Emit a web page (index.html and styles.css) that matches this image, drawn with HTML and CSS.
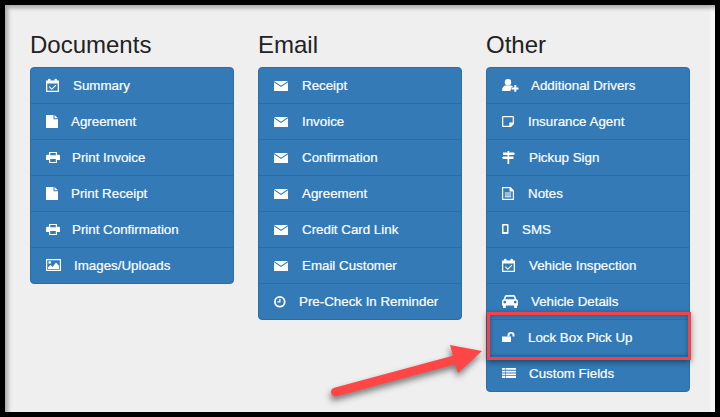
FILE: index.html
```html
<!DOCTYPE html>
<html lang="en">
<head>
<meta charset="utf-8">
<title>Reservation actions</title>
<link rel="stylesheet" href="styles.css">
</head>
<body>
<svg class="defs" aria-hidden="true">
  <symbol id="cal" viewBox="0 0 15 16"><path fill-rule="evenodd" d="M0 3.500h2V3a1 1 0 0 1 2.600 0v.5h3.800V3A1 1 0 0 1 11 3v.5h2V15H0ZM1.300 6.500v7.200h10.400V6.500Z"/><path d="M3.700 9.300 5.800 11.400 9.500 7.700 10.300 8.500 5.800 13 2.900 10.100Z"/></symbol>
  <symbol id="file" viewBox="0 0 13 16"><path d="M0 2h7.500v4.200H12V15H0ZM8.500 2 12 5.300H8.500Z"/></symbol>
  <symbol id="print" viewBox="0 0 14 16"><path fill-rule="evenodd" d="M3 3h8v2.800h1.800A1.200 1.200 0 0 1 14 7v4h-3v3H3v-3H0V7a1.200 1.200 0 0 1 1.200-1.200H3ZM4.200 4.100v2.200h5.600V4.100ZM4.200 10v2.900h5.600V10Z"/></symbol>
  <symbol id="image" viewBox="0 0 16 16"><path fill-rule="evenodd" d="M0 2h15v12H0ZM1.200 3.200v9.600h12.600V3.200Z"/><path d="M2 12v-1.500L4.500 8l2 2 3.500-4.500 3 3.500v3Z"/><circle cx="3.700" cy="5.400" r="1.300"/></symbol>
  <symbol id="mail" viewBox="0 0 16 16"><path d="M0 4h14L7 8.700Z"/><path d="M0 5.200 7 10 14 5.200V14H0Z"/></symbol>
  <symbol id="clock" viewBox="0 0 13 16"><path fill-rule="evenodd" d="M5.800 3a5.800 5.800 0 1 1 0 11.600 5.800 5.800 0 0 1 0-11.600ZM5.800 4.800a4 4 0 1 0 0 8 4 4 0 0 0 0-8Z"/><path d="M5.300 5.800h1.200v3.600H3.400V8.300h1.900Z"/></symbol>
  <symbol id="useradd" viewBox="0 0 17 16"><circle cx="6" cy="5.200" r="3.200"/><path d="M0 14C0 10.500 1.800 8.600 3.500 8.600h5c1 0 2 .6 2.500 1.400H9.500v2.500H8.500V14Z"/><path d="M12.300 8h2v2.500H16.500v1.900h-2.200V14.700h-2v-2.300H10v-1.900h2.300Z"/></symbol>
  <symbol id="note" viewBox="0 0 14 16"><path fill-rule="evenodd" d="M1 3h10a1 1 0 0 1 1 1v7l-3 3H1a1 1 0 0 1-1-1V4a1 1 0 0 1 1-1ZM1.300 4.300v8.400h6V9.500h3.400V4.300Z"/></symbol>
  <symbol id="sign" viewBox="0 0 15 16"><path d="M5.500 2h1.700v1.500h4.600L13 4.800 11.800 6H7.200v1.500h4.300v2.500H7.200V15H5.500v-5H1.200L0 8.800 1.200 7.500h4.300V6H1V3.500h4.500Z"/></symbol>
  <symbol id="notes" viewBox="0 0 14 16"><path fill-rule="evenodd" d="M0 2h8.500L12 5.500V15H0ZM1.200 3.200v10.600h9.600V6.500H7.500V3.200Z"/><path d="M2.800 7.500h6.400v1H2.800ZM2.800 9.400h6.400v1H2.800ZM2.800 11.300h6.400v1H2.800Z"/></symbol>
  <symbol id="phone" viewBox="0 0 8 16"><path fill-rule="evenodd" d="M1 3h4.500a1 1 0 0 1 1 1v8a1 1 0 0 1-1 1H1a1 1 0 0 1-1-1V4a1 1 0 0 1 1-1ZM1.500 4.500v6.500h3.500V4.500Z"/></symbol>
  <symbol id="car" viewBox="0 0 17 16"><path fill-rule="evenodd" d="M4.500 2h7a2 2 0 0 1 1.800 1.200L14.300 6.200C15.400 6.500 16 7.500 16 8.500v4h-1V15h-2.800v-2.500H3.800V15H1v-2.500H0v-4c0-1 .6-2 1.700-2.300L2.700 3.200A2 2 0 0 1 4.500 2ZM4.200 3.700 3.300 6.300h9.400l-.9-2.600ZM2.800 7.700a1.400 1.400 0 1 0 0 2.800 1.400 1.400 0 0 0 0-2.800ZM13.200 7.700a1.400 1.400 0 1 0 0 2.800 1.400 1.400 0 0 0 0-2.800Z"/></symbol>
  <symbol id="lock" viewBox="0 0 14 16"><path d="M0 7.500h9V13H0Z"/><path d="M5.500 7.500V6a3.500 3 0 0 1 7 0v1.500h-2V6a1.500 1.500 0 0 0-3 0v1.500Z"/></symbol>
  <symbol id="list" viewBox="0 0 15 16"><path d="M0 3h14v1.800H0ZM0 5.700h14v1.800H0ZM0 8.400h14v1.800H0ZM0 11.100h14V13H0Z"/><path class="cut" d="M3.300 3h.6v10h-.6Z"/></symbol>
</svg>
<main class="frame">
  <section class="col">
    <h3>Documents</h3>
    <ul class="panel">
      <li><svg class="i w15"><use href="#cal"/></svg>Summary</li>
      <li><svg class="i w13"><use href="#file"/></svg>Agreement</li>
      <li><svg class="i w14"><use href="#print"/></svg>Print Invoice</li>
      <li><svg class="i w13"><use href="#file"/></svg>Print Receipt</li>
      <li><svg class="i w14"><use href="#print"/></svg>Print Confirmation</li>
      <li><svg class="i w16"><use href="#image"/></svg>Images/Uploads</li>
    </ul>
  </section>
  <section class="col">
    <h3>Email</h3>
    <ul class="panel">
      <li><svg class="i w16"><use href="#mail"/></svg>Receipt</li>
      <li><svg class="i w16"><use href="#mail"/></svg>Invoice</li>
      <li><svg class="i w16"><use href="#mail"/></svg>Confirmation</li>
      <li><svg class="i w16"><use href="#mail"/></svg>Agreement</li>
      <li><svg class="i w16"><use href="#mail"/></svg>Credit Card Link</li>
      <li><svg class="i w16"><use href="#mail"/></svg>Email Customer</li>
      <li><svg class="i w13"><use href="#clock"/></svg>Pre-Check In Reminder</li>
    </ul>
  </section>
  <section class="col">
    <h3>Other</h3>
    <ul class="panel">
      <li><svg class="i w17"><use href="#useradd"/></svg>Additional Drivers</li>
      <li><svg class="i w14"><use href="#note"/></svg>Insurance Agent</li>
      <li><svg class="i w15"><use href="#sign"/></svg>Pickup Sign</li>
      <li><svg class="i w14"><use href="#notes"/></svg>Notes</li>
      <li><svg class="i w8"><use href="#phone"/></svg>SMS</li>
      <li><svg class="i w15"><use href="#cal"/></svg>Vehicle Inspection</li>
      <li><svg class="i w17"><use href="#car"/></svg>Vehicle Details</li>
      <li><svg class="i w14"><use href="#lock"/></svg>Lock Box Pick Up</li>
      <li><svg class="i w15"><use href="#list"/></svg>Custom Fields</li>
    </ul>
  </section>
  <div class="redbox"></div>
  <svg class="arrow" viewBox="0 0 170 70" aria-hidden="true">
    <path class="shaft" d="M9.500 62 128 30"/>
    <path class="head" d="M124 15 156 21 132 43Z"/>
  </svg>
</main>
</body>
</html>
```
FILE: styles.css
```css
* { box-sizing: border-box; }
html, body { margin: 0; padding: 0; }
body { width: 720px; height: 417px; overflow: hidden; background: #000; }
.defs { display: none; }
.frame {
  position: relative;
  display: flex;
  gap: 24px;
  width: 720px;
  height: 417px;
  padding: 22px 0 0 25px;
  border: 5px solid #000;
  background: #efefef;
  box-shadow: inset 4px 4px 4px -1px #a9a9a9, inset -5px 0 0 #f8f8f8;
  font-family: "Liberation Sans", Arial, sans-serif;
}
.col { width: 204px; }
h3 {
  margin: 0 0 4px;
  font-size: 24px;
  font-weight: 400;
  line-height: 36px;
  color: #222;
}
.panel {
  margin: 0;
  padding: 0;
  list-style: none;
  background: #337ab7;
  border: 1px solid #2e6da4;
  border-radius: 4px;
}
.panel li {
  display: flex;
  align-items: center;
  gap: 12px;
  height: 36px;
  padding: 0 15px;
  border-top: 1px solid #2e6da4;
  color: #fff;
  font-size: 13.33px;
  font-weight: 400;
  -webkit-text-stroke: 0.2px #fff;
}
.panel li:first-child { height: 35px; border-top: 0; }
.i { flex: none; align-self: flex-start; height: 16px; margin-top: 9px; fill: #fff; }
.cut { fill: #337ab7; }
.w8 { width: 8px; }
.w13 { width: 13px; }
.w14 { width: 14px; }
.w15 { width: 15px; }
.w16 { width: 16px; }
.w17 { width: 17px; }
.redbox {
  position: absolute;
  left: 482px;
  top: 307px;
  width: 204px;
  height: 48px;
  border: 3px solid #f2424a;
  box-shadow: 0 2px 6px rgba(0, 0, 0, 0.45), inset 0 0 5px rgba(0, 0, 0, 0.3);
}
.arrow {
  position: absolute;
  left: 321px;
  top: 325px;
  width: 170px;
  height: 70px;
  overflow: visible;
  filter: drop-shadow(-1px 4px 3px rgba(0, 0, 0, 0.5));
}
.shaft { fill: none; stroke: #ff4646; stroke-width: 9; stroke-linecap: round; }
.head { fill: #ff4646; }
```
